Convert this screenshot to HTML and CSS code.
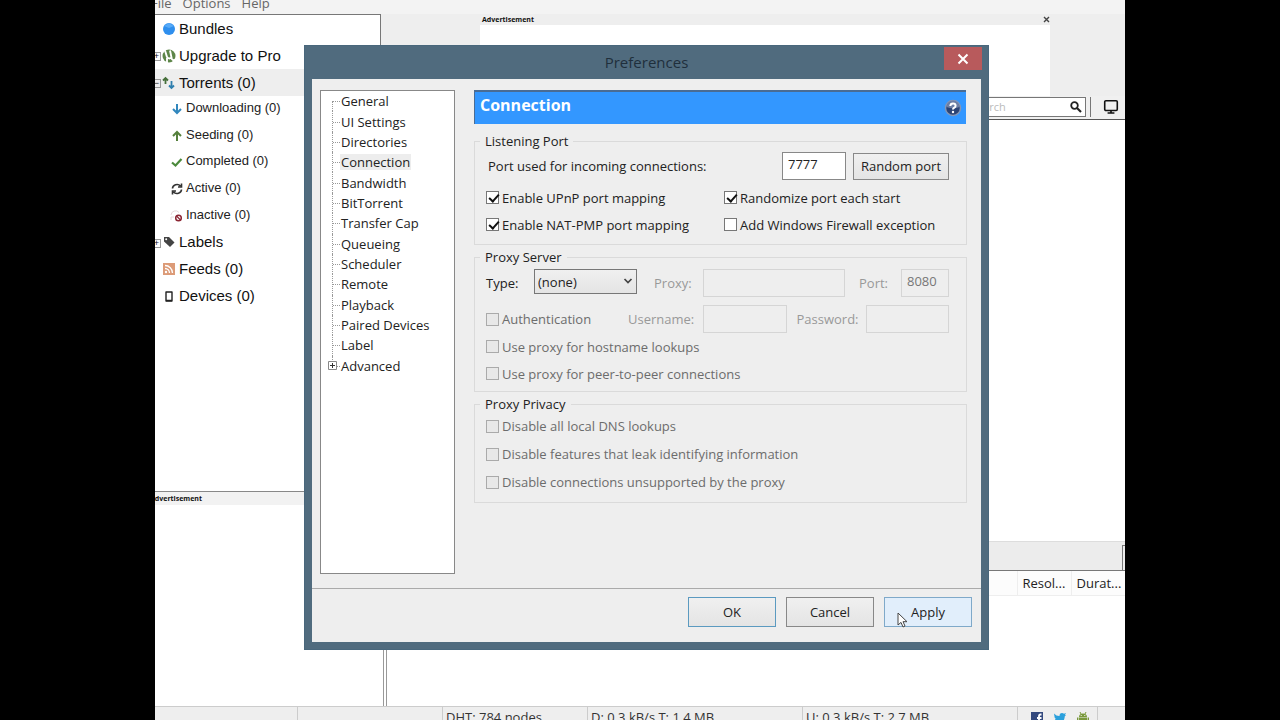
FILE: index.html
```html
<!DOCTYPE html>
<html lang="en">
<head>
<meta charset="utf-8">
<title>Preferences</title>
<link rel="stylesheet" href="styles.css">
</head>
<body>
<div class="app">
  <nav class="menubar">
    <button type="button">File</button>
    <button type="button">Options</button>
    <button type="button">Help</button>
  </nav>

  <div class="workspace">
    <aside class="side">
      <ul class="nav">
        <li><span class="twisty none"></span><svg viewBox="0 0 14 14"><circle cx="7" cy="7" r="6" fill="#2f8fee"/><path d="M2 4l5-3 5 3-5 2z" fill="#57aaf8"/></svg>Bundles</li>
        <li><span class="twisty">+</span><svg viewBox="0 0 14 14"><ellipse cx="7" cy="7" rx="6.500" ry="6.500" fill="#5d8548"/><path d="M3 1.500l2 6.500q2 2.500 4.500.500L8 1.500M9.200 8.500q1 3.500 4.300 2.500M5 9v5" fill="none" stroke="#fff" stroke-width="1.900"/></svg>Upgrade to Pro</li>
        <li class="current"><span class="twisty">−</span><svg viewBox="0 0 14 14"><path d="M3.500 8V2M1 4.500L3.500 2 6 4.500" fill="none" stroke="#47703b" stroke-width="1.800"/><path d="M9.500 5v7M7 9.500l2.500 2.500L12 9.500" fill="none" stroke="#2f7fae" stroke-width="1.800"/></svg>Torrents (0)</li>
        <li class="child"><svg viewBox="0 0 14 14"><path d="M7 3v9M3 8l4 4 4-4" fill="none" stroke="#3187bd" stroke-width="2"/></svg>Downloading (0)</li>
        <li class="child"><svg viewBox="0 0 14 14"><path d="M7 13V4M3 8l4-4 4 4" fill="none" stroke="#55803c" stroke-width="2"/></svg>Seeding (0)</li>
        <li class="child"><svg viewBox="0 0 14 14"><path d="M2 8.500l3.500 3L11.500 5" fill="none" stroke="#4b8a3c" stroke-width="2.200"/></svg>Completed (0)</li>
        <li class="child"><svg viewBox="0 0 14 14"><path d="M2.500 7.500a4.500 4 0 0 1 8-2.500M11.500 8.500a4.500 4 0 0 1-8 2.500M11.500 2.500V6H8M2.500 13.500V10H6" fill="none" stroke="#333" stroke-width="1.600"/></svg>Active (0)</li>
        <li class="child"><svg viewBox="0 0 14 14"><path d="M1 7a4.500 4.500 0 0 1 8-2.500M1 12V9h3" fill="none" stroke="#e6d8da"/><circle cx="8.500" cy="10" r="2.800" fill="#fff" stroke="#8c2633" stroke-width="1.500"/><path d="M6.500 8l4 4" stroke="#8c2633" stroke-width="1.300"/></svg>Inactive (0)</li>
        <li><span class="twisty">+</span><svg viewBox="0 0 14 14"><path d="M2 2h5l5.500 5.500-4.500 4.500L2 6.500z" fill="#444"/><circle cx="4.200" cy="4.200" r="1" fill="#fff"/></svg>Labels</li>
        <li><span class="twisty none"></span><svg viewBox="0 0 14 14"><rect x="1" y="1" width="12" height="12" fill="#dc9b78"/><circle cx="4" cy="10" r="1.200" fill="#fff"/><path d="M3 6.500a4.500 4.500 0 0 1 4.500 4.500M3 3.500a7.500 7.500 0 0 1 7.500 7.500" fill="none" stroke="#fff" stroke-width="1.300"/></svg>Feeds (0)</li>
        <li><span class="twisty none"></span><svg viewBox="0 0 14 14"><path d="M4 3h6v9H4z" fill="none" stroke="#222" stroke-width="1.400" stroke-linejoin="round"/><path d="M4 11.500h6" stroke="#222" stroke-width="1.500"/></svg>Devices (0)</li>
      </ul>
      <section class="side-ad"><h2 class="ad-label">Advertisement</h2></section>
    </aside>

    <main class="content">
      <div class="ad-strip">
        <section class="ad">
          <div class="ad-head"><h2 class="ad-label">Advertisement</h2><button type="button" aria-label="Close advertisement"><svg viewBox="0 0 7 7"><path d="M1 1l5 5M6 1L1 6" stroke="#444" stroke-width="1.400"/></svg></button></div>
          <div class="ad-body"></div>
        </section>
      </div>
      <div class="toolbar">
        <div class="search"><input type="search" placeholder="Search" aria-label="Search"><svg viewBox="0 0 12 12"><circle cx="4.500" cy="4.500" r="3.300" fill="none" stroke="#222" stroke-width="1.800"/><path d="M7 7l4 4" stroke="#222" stroke-width="2.200"/></svg></div>
        <button class="remote" type="button" aria-label="Remote"><svg viewBox="0 0 14 14"><rect x="1.500" y="1.500" width="11" height="8.500" rx="1" fill="none" stroke="#111" stroke-width="1.400"/><path d="M7 10v2M4 12.300h6" stroke="#111" stroke-width="1.400"/></svg></button>
      </div>
      <div class="torrent-list"></div>
      <div class="tabs"><span class="tab-end"></span></div>
      <div class="details">
        <table>
          <thead><tr><th class="fill"></th><th>Resol...</th><th>Durat...</th></tr></thead>
        </table>
      </div>
    </main>
  </div>

  <footer class="status">
    <span class="cell a"></span>
    <span class="cell b"></span>
    <span class="cell b">DHT: 784 nodes</span>
    <span class="cell c">D: 0.3 kB/s T: 1.4 MB</span>
    <span class="cell c">U: 0.3 kB/s T: 2.7 MB</span>
    <span class="cell social">
      <svg viewBox="0 0 12 12"><rect width="12" height="12" fill="#33497e"/><path d="M10.500 2.500H9.500Q8 2.500 8 4v8M6 6h4.500" fill="none" stroke="#fff" stroke-width="1.800"/></svg>
      <svg viewBox="0 0 12 12"><path d="M0 1.500q2.500 2.700 5.500 2.500Q5.500 1 8 1q1.200 0 2 .800L12 1l-1 2 1 .300-1.200 1Q10.500 11 4 11 1.500 11 0 10q2 0 3.300-1Q1.500 8.700 1 7h1Q.300 6 .500 4.500z" fill="#2ba0dc"/></svg>
      <svg viewBox="0 0 12 12"><path d="M2 5q0-3.500 4-3.500T10 5zM2 5.500h8V11H2zM0 5.500h1.400V10H0zM10.600 5.500H12V10h-1.400z" fill="#79983b"/><path d="M3 0l1 2M9 0L8 2" stroke="#79983b"/><circle cx="4.200" cy="3.500" r=".6" fill="#fff"/><circle cx="7.800" cy="3.500" r=".6" fill="#fff"/></svg>
    </span>
  </footer>

  <div class="dialog" role="dialog" aria-labelledby="dialog-title">
    <header class="titlebar">
      <h1 id="dialog-title">Preferences</h1>
      <button class="close" type="button" aria-label="Close"><svg viewBox="0 0 12 12"><path d="M1.500 1.500l9 9M10.500 1.500l-9 9" stroke="#fff" stroke-width="2"/></svg></button>
    </header>
    <form class="client">
      <div class="pages">
        <div class="tree">
          <ul>
            <li><span>General</span></li>
            <li><span>UI Settings</span></li>
            <li><span>Directories</span></li>
            <li><span class="selected">Connection</span></li>
            <li><span>Bandwidth</span></li>
            <li><span>BitTorrent</span></li>
            <li><span>Transfer Cap</span></li>
            <li><span>Queueing</span></li>
            <li><span>Scheduler</span></li>
            <li><span>Remote</span></li>
            <li><span>Playback</span></li>
            <li><span>Paired Devices</span></li>
            <li><span>Label</span></li>
            <li class="folder"><svg viewBox="0 0 9 9"><path d="M.5.5h8v8h-8z" fill="#fff" stroke="#888"/><path d="M2 4.500h5M4.500 2v5" stroke="#333"/></svg><span>Advanced</span></li>
          </ul>
        </div>
        <div class="page">
          <div class="banner">
            <h2>Connection</h2>
            <button type="button" aria-label="Help"><svg viewBox="0 0 18 18"><circle cx="9" cy="9" r="7.500" fill="#2c4475" stroke="#8497b8" stroke-width="1.500"/><path d="M2.500 8a6.500 6.500 0 0 1 13 0q-6.500 2.500-13 0z" fill="#6d7fa5"/><path d="M6.300 7Q6.500 4.500 9 4.500t2.600 2.200Q11.600 8 10 8.800 9 9.400 9 10.500" fill="none" stroke="#fff" stroke-width="2"/><circle cx="9" cy="13" r="1.200" fill="#fff"/></svg></button>
          </div>
          <fieldset>
            <legend>Listening Port</legend>
            <div class="row port-row">
              <label for="port">Port used for incoming connections:</label>
              <input id="port" class="text port" type="text" value="7777">
              <button class="btn random" type="button">Random port</button>
            </div>
            <div class="checks">
              <label class="check"><input type="checkbox" checked>Enable UPnP port mapping</label>
              <label class="check"><input type="checkbox" checked>Randomize port each start</label>
              <label class="check"><input type="checkbox" checked>Enable NAT-PMP port mapping</label>
              <label class="check"><input type="checkbox">Add Windows Firewall exception</label>
            </div>
          </fieldset>
          <fieldset class="proxy-server">
            <legend>Proxy Server</legend>
            <div class="row proxy-row">
              <label for="type" class="type">Type:</label>
              <span class="select"><select id="type"><option>(none)</option></select><svg viewBox="0 0 10 6"><path d="M1.500 1L5 4.500 8.500 1" fill="none" stroke="#444" stroke-width="1.700"/></svg></span>
              <label for="proxy" class="off">Proxy:</label>
              <input id="proxy" class="text grow" type="text" disabled>
              <label for="proxy-port" class="off">Port:</label>
              <input id="proxy-port" class="text short" type="text" value="8080" disabled>
            </div>
            <div class="row auth-row">
              <label class="check"><input type="checkbox" disabled>Authentication</label>
              <label for="user" class="off">Username:</label>
              <input id="user" class="text" type="text" disabled>
              <label for="pass" class="off">Password:</label>
              <input id="pass" class="text" type="password" disabled>
            </div>
            <label class="check"><input type="checkbox" disabled>Use proxy for hostname lookups</label>
            <label class="check"><input type="checkbox" disabled>Use proxy for peer-to-peer connections</label>
          </fieldset>
          <fieldset class="privacy">
            <legend>Proxy Privacy</legend>
            <label class="check"><input type="checkbox" disabled>Disable all local DNS lookups</label>
            <label class="check"><input type="checkbox" disabled>Disable features that leak identifying information</label>
            <label class="check"><input type="checkbox" disabled>Disable connections unsupported by the proxy</label>
          </fieldset>
        </div>
      </div>
      <div class="actions">
        <button class="btn default" type="button">OK</button>
        <button class="btn" type="button">Cancel</button>
        <button class="btn hover" type="button">Apply<svg class="cursor" viewBox="0 0 11 16"><path d="M1 1v12l3-2.600 2 4.600 2-1-2-4.300h4z" fill="#fff" stroke="#444"/></svg></button>
      </div>
    </form>
  </div>
</div>
</body>
</html>
```
FILE: styles.css
```css
* { box-sizing: border-box; }
body {
  margin: 0;
  padding: 0 155px;
  background: #000;
  color: #222;
  font: 13px/16px "Open Sans", "Noto Sans", sans-serif;
}
button, input, select { font: inherit; color: inherit; margin: 0; }
h1, h2, ul { margin: 0; padding: 0; font: inherit; list-style: none; }
svg { display: block; flex: none; }

.app {
  position: relative;
  display: flex;
  flex-direction: column;
  height: 100vh;
  overflow: hidden;
  background: #fff;
}

.menubar {
  display: flex;
  align-items: flex-end;
  gap: 11px;
  height: 14px;
  padding-bottom: 3px;
  background: #f3f3f3;
  overflow: hidden;
}
.menubar button { padding: 0; border: 0; background: none; color: #666; }
.menubar button:first-child { margin-left: -4px; }

.workspace { flex: 1; display: flex; min-height: 0; }

.side { width: 229px; display: flex; flex-direction: column; background: #eee; }
.nav {
  flex: 1;
  display: grid;
  grid-template-rows: repeat(11, 1fr);
  margin-right: 3px;
  padding: 1px 0 182px;
  border: solid #777;
  border-width: 1px 1px 0 0;
  background: #fff;
  font: 15px/18px "Liberation Sans", Arial, sans-serif;
  color: #111;
}
.nav li { display: flex; align-items: center; min-height: 0; }
.nav li svg { width: 14px; height: 14px; margin-right: 3px; }
.nav .current { background: #eee; }
.nav .child { padding: 0 0 2px 15px; font-size: 13px; color: #222; }
.nav .child svg { margin-right: 2px; }
.twisty {
  width: 9px;
  height: 9px;
  margin: 2px 1px 0 -3px;
  border: 1px solid #999;
  font-size: 9px;
  line-height: 7px;
  text-align: center;
}
.twisty.none { visibility: hidden; }
.side-ad {
  height: 215px;
  border-top: 1px solid #888;
  border-right: 1px solid #999;
  background: #fff;
  overflow: hidden;
}
.ad-label { font-size: 7px; line-height: 11px; font-weight: 700; color: #111; }
.side-ad .ad-label { height: 13px; padding-top: 1px; background: #f2f2f2; text-indent: -5px; }

.content { flex: 1; min-width: 0; display: flex; flex-direction: column; }
.ad-strip { height: 82px; padding: 0 75px 0 96px; background: #eee; }
.ad-head { display: flex; justify-content: space-between; align-items: center; height: 11px; padding-left: 2px; }
.ad-head button { padding: 0; border: 0; background: none; }
.ad-head svg { width: 7px; height: 7px; }
.ad-body { height: 71px; background: #fff; }
.toolbar {
  display: flex;
  justify-content: flex-end;
  align-items: center;
  height: 24px;
  padding: 0 6px 1px 0;
  background: #f0f0f0;
  border-bottom: 1px solid #555;
}
.search {
  display: flex;
  align-items: center;
  width: 120px;
  height: 20px;
  padding-right: 3px;
  margin-right: 4px;
  background: #fff;
  border: 1px solid #777;
}
.search input { flex: 1; min-width: 0; padding: 0 0 0 4px; border: 0; outline: 0; background: none; font-size: 11px; }
.search input::placeholder { color: #bbb; }
.search svg { width: 12px; height: 12px; }
.remote { height: 20px; padding: 0 0 0 12px; border: 0; border-left: 1px solid #777; background: none; }
.remote svg { width: 16px; height: 16px; }
.torrent-list { flex: 1; }
.tabs { display: flex; justify-content: flex-end; align-items: flex-end; height: 30px; background: #ececec; border-top: 1px solid #ddd; border-bottom: 1px solid #777; }
.tab-end { width: 3px; height: 25px; border: solid #777; border-width: 1px 0 0 1px; }
.details { height: 135px; margin-left: 2px; border-left: 1px solid #999; }
.details table { width: 100%; border-collapse: collapse; table-layout: fixed; }
.details th { width: 54px; height: 24px; padding: 0 0 0 5px; border: solid #eee; border-width: 0 0 1px 1px; font-weight: 400; text-align: left; background: #fcfcfc; white-space: nowrap; }
.details .fill { width: auto; }

.status { display: flex; height: 14px; background: #eee; border-top: 1px solid #ccc; overflow: hidden; color: #333; }
.cell { height: 20px; padding: 2px 0 0 3px; border-right: 1px solid #ccc; white-space: nowrap; }
.cell.a { width: 143px; }
.cell.b { width: 145px; }
.cell.c { width: 215px; }
.cell.social { flex: none; width: 80px; display: flex; gap: 11px; padding: 5px 0 0 13px; }
.social svg { width: 12px; height: 12px; }

.dialog {
  position: absolute;
  top: 45px;
  left: 149px;
  width: 685px;
  padding: 0 7px 7px;
  border: 1px solid #49677c;
  background: #506b7e;
}
.titlebar { display: flex; justify-content: center; height: 33px; position: relative; }
.titlebar h1 { font-size: 15px; line-height: 33px; color: #1f2f3c; }
.close {
  position: absolute;
  right: -1px;
  top: 1px;
  width: 38px;
  height: 23px;
  padding: 0 13px;
  border: 0;
  background: #b85a5c;
}
.close svg { width: 12px; height: 12px; }
.client { background: #eee; }
.pages { display: flex; gap: 19px; padding: 11px 14px 14px 8px; }
.tree { width: 135px; height: 484px; border: 1px solid #888; background: #fff; }
.tree ul { display: grid; grid-auto-rows: 1fr; height: 285px; }
.tree li { display: flex; align-items: center; position: relative; padding-left: 19px; }
.tree li::before { content: ""; position: absolute; left: 11px; top: 0; bottom: 0; border-left: 1px dotted #999; }
.tree li::after { content: ""; position: absolute; left: 12px; width: 7px; top: 50%; border-top: 1px dotted #999; }
.tree li:first-child::before { top: 50%; }
.tree li:last-child::before { bottom: 50%; }
.tree li svg { position: absolute; left: 7px; width: 9px; height: 9px; z-index: 1; }
.tree span { padding: 0 1px; }
.tree .selected { background: #ededed; }

.page { flex: 1; min-width: 0; }
.banner {
  display: flex;
  justify-content: space-between;
  height: 34px;
  margin: 0 1px 9px 0;
  padding: 0 4px 0 5px;
  background: #3397ff;
  border: solid #4a6c94;
  border-width: 2px 0 0 1px;
}
.banner h2 { font-size: 16px; line-height: 27px; font-weight: 700; color: #fff; }
.banner button { padding: 0; border: 0; background: none; }
.banner svg { width: 18px; height: 18px; }
fieldset { min-width: 0; margin: 0 0 4px; padding: 0 17px 6px 11px; border: 1px solid #dadada; }
legend { margin-left: -6px; padding: 0 5px; }
.row { display: flex; align-items: center; height: 28px; }
.text { height: 28px; min-width: 0; padding: 0 5px 4px; border: 1px solid #888; border-radius: 0; background: #fff; }
.text:disabled { background: #eee; border-color: #d5d5d5; color: #777; }
.btn { padding: 0; border: 1px solid #888; background: linear-gradient(#f0f0f0, #e4e4e4); }
.port-row { margin: 3px 0 4px; gap: 7px; }
.port-row label { flex: 1; padding-left: 2px; }
.port { width: 64px; }
.random { width: 96px; height: 27px; }
.checks { display: grid; grid-template-columns: 238px 1fr; }
.check { display: flex; align-items: center; gap: 3px; height: 27px; white-space: nowrap; }
.check input {
  appearance: none;
  flex: none;
  width: 13px;
  height: 13px;
  border: 1px solid #777;
  background: #fff;
}
.check input:checked::before {
  content: "";
  display: block;
  width: 8px;
  height: 4px;
  margin: 2px;
  border: solid #111;
  border-width: 0 0 2px 2px;
  transform: rotate(-48deg);
}
.check input:disabled { border-color: #aaa; background: #e8e8e8; }
.check:has(input:disabled) { color: #6c6c6c; }
.proxy-server { padding-bottom: 4px; }
.privacy .check { height: 28px; }
.proxy-row { margin: 4px 0 8px; }
.type { width: 48px; }
.select { position: relative; width: 103px; height: 25px; margin: 0 17px 3px 0; }
.select select { appearance: none; width: 100%; height: 25px; padding: 0 3px; border: 1px solid #777; border-radius: 0; background: linear-gradient(#f0f0f0, #e4e4e4); }
.select svg { position: absolute; right: 4px; top: 9px; width: 10px; height: 6px; pointer-events: none; }
.off { color: #999; }
.proxy-row .off { width: 49px; }
.proxy-row .grow { flex: 1; margin-right: 14px; }
.proxy-row .off:nth-of-type(3) { width: 42px; }
.short { width: 48px; }
.auth-row .check { width: 142px; }
.auth-row .off { width: 75px; }
.auth-row .text { flex: 1; }
.auth-row .text + .off { width: 79px; padding-left: 10px; }

.actions { display: flex; justify-content: flex-end; gap: 10px; padding: 8px 9px 15px; border-top: 1px solid #aaa; }
.actions .btn { position: relative; width: 88px; height: 30px; }
.actions .default { border-color: #5b9ac0; }
.actions .hover { border-color: #7fa9c9; background: #e1eefb; }
.cursor { position: absolute; left: 12px; top: 14px; width: 11px; height: 16px; }
```
